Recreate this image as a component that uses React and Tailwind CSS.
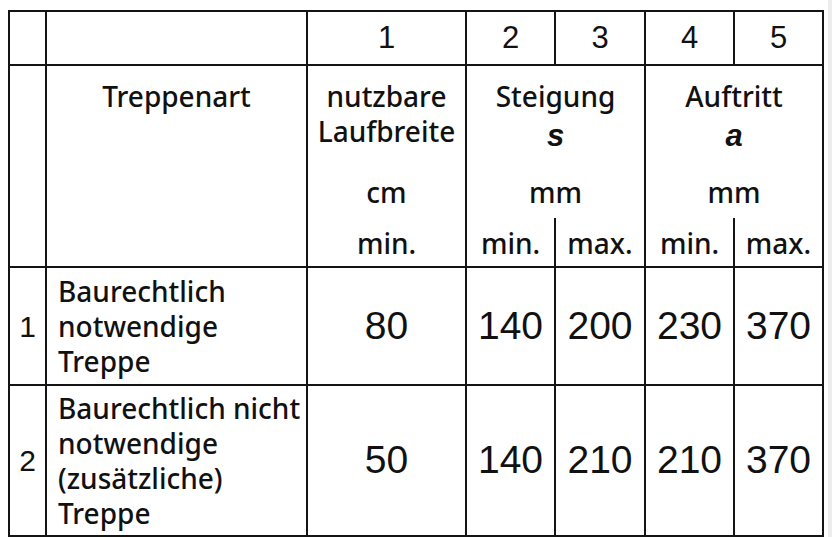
import React from 'react';

const sans = "font-['Noto_Sans',sans-serif] font-medium text-[28px] leading-[35px]";
const arial = "font-['Liberation_Sans',Arial,sans-serif]";

const rows = [
  { no: '1', lines: ['Baurechtlich', 'notwendige', 'Treppe'], values: ['80', '140', '200', '230', '370'] },
  { no: '2', lines: ['Baurechtlich nicht', 'notwendige', '(zusätzliche)', 'Treppe'], values: ['50', '140', '210', '210', '370'] },
];

function Cell({ children, className = '' }) {
  return <div className={`bg-white ${className}`}>{children}</div>;
}

function GroupHeader({ title, symbol, unit }) {
  return (
    <Cell className="col-span-2 flex flex-col text-center">
      <div className="h-[109px] pt-[13px]">
        <div className={sans}>{title}</div>
        <div className={`${arial} italic font-bold text-[31px] leading-[35px] mt-[4px]`}>{symbol}</div>
      </div>
      <div className={`h-[43px] ${sans}`}>{unit}</div>
      <div className={`h-[48px] flex ${sans}`}>
        <div className="w-[89px] border-r-2 border-[#141414] pt-[8px]">min.</div>
        <div className="flex-1 pt-[8px]">max.</div>
      </div>
    </Cell>
  );
}

export default function App() {
  return (
    <div className="w-[832px] h-[537px] bg-white text-[#111] overflow-hidden flex">
      <div className="pl-[8px] pt-[10px]">
        <div className="grid grid-cols-[35px_259px_157px_87px_88px_87px_87px] grid-rows-[52px_200px_116px_149px] gap-[2px] p-[2px] bg-[#141414] w-[816px]">
          {/* column numbers */}
          <Cell />
          <Cell />
          {['1', '2', '3', '4', '5'].map(n => (
            <Cell key={n} className={`flex items-center justify-center ${arial} text-[31px]`}>{n}</Cell>
          ))}

          {/* header */}
          <Cell />
          <Cell className={`text-center pt-[13px] ${sans}`}>Treppenart</Cell>
          <Cell className="flex flex-col text-center">
            <div className={`h-[109px] pt-[13px] ${sans}`}>
              <div>nutzbare</div>
              <div>Laufbreite</div>
            </div>
            <div className={`h-[43px] ${sans}`}>cm</div>
            <div className={`h-[48px] pt-[8px] ${sans}`}>min.</div>
          </Cell>
          <GroupHeader title="Steigung" symbol="s" unit="mm" />
          <GroupHeader title="Auftritt" symbol="a" unit="mm" />

          {/* data */}
          {rows.map(r => (
            <React.Fragment key={r.no}>
              <Cell className={`flex items-center justify-center ${arial} text-[30px]`}>{r.no}</Cell>
              <Cell className={`flex flex-col justify-center pl-[11px] ${sans}`}>
                {r.lines.map(l => <div key={l}>{l}</div>)}
              </Cell>
              {r.values.map((v, i) => (
                <Cell key={i} className={`flex items-center justify-center ${arial} text-[39px]`}>{v}</Cell>
              ))}
            </React.Fragment>
          ))}
        </div>
      </div>
      <div className="flex-1" />
      <div className="w-[4px] h-full bg-[#ededed]" />
    </div>
  );
}
